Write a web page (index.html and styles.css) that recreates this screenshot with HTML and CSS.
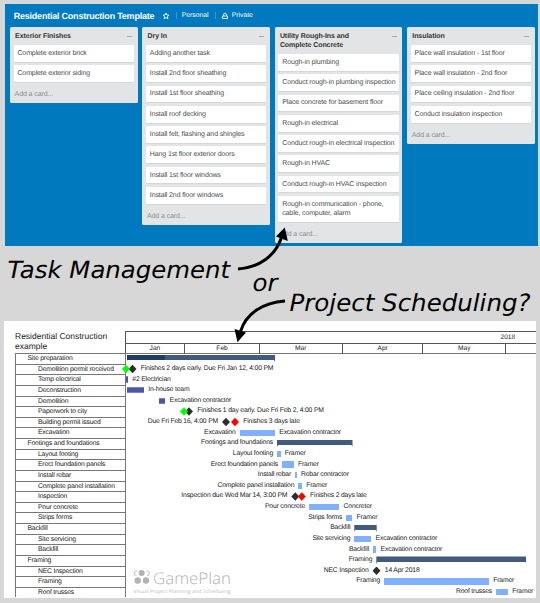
FILE: index.html
```html
<!DOCTYPE html>
<html lang="en">
<head>
<meta charset="utf-8">
<title>Task Management or Project Scheduling?</title>
<link rel="stylesheet" href="styles.css">
</head>
<body>
<section class="board">
  <header class="board-head">
    <h1>Residential Construction Template</h1>
    <svg class="star" viewBox="0 0 16 16"><path d="M8 2l1.800 4 4.200.400-3.200 2.800 1 4.300L8 11.300l-3.800 2.200 1-4.300L2 6.400 6.200 6z"/></svg>
    <i class="sep"></i><span class="personal">Personal</span><i class="sep"></i>
    <svg class="lock" viewBox="0 0 16 16"><path d="M5 8V5.500a3 3 0 0 1 6 0V8M3 8h10v5H3z"/></svg>
    <span class="private">Private</span>
  </header>
  <div class="lists">
    <div class="list">
      <h2>Exterior Finishes<b></b></h2>
      <p>Complete exterior brick</p><p>Complete exterior siding</p>
      <footer>Add a card...</footer>
    </div>
    <div class="list">
      <h2>Dry In<b></b></h2>
      <p>Adding another task</p><p>Install 2nd floor sheathing</p><p>Install 1st floor sheathing</p><p>Install roof decking</p><p>Install felt, flashing and shingles</p><p>Hang 1st floor exterior doors</p><p>Install 1st floor windows</p><p>Install 2nd floor windows</p>
      <footer>Add a card...</footer>
    </div>
    <div class="list">
      <h2>Utility Rough-Ins and<br>Complete Concrete<b></b></h2>
      <p>Rough-in plumbing</p><p>Conduct rough-in plumbing inspection</p><p>Place concrete for basement floor</p><p>Rough-in electrical</p><p>Conduct rough-in electrical inspection</p><p>Rough-in HVAC</p><p>Conduct rough-in HVAC inspection</p><p>Rough-in communication - phone,<br>cable, computer, alarm</p>
      <footer>Add a card...</footer>
    </div>
    <div class="list">
      <h2>Insulation<b></b></h2>
      <p>Place wall insulation - 1st floor</p><p>Place wall insulation - 2nd floor</p><p>Place ceiling insulation - 2nd floor</p><p>Conduct insulation inspection</p>
      <footer>Add a card...</footer>
    </div>
  </div>
</section>

<svg class="question" viewBox="0 245.500 540 75.500">
  <g class="big">
    <text x="7.500" y="277" textLength="222.500" lengthAdjust="spacingAndGlyphs">Task Management</text>
    <text x="252.500" y="290" textLength="25" lengthAdjust="spacingAndGlyphs">or</text>
    <text x="289.500" y="310.300" textLength="241" lengthAdjust="spacingAndGlyphs">Project Scheduling?</text>
  </g>
  <path class="stroke" d="M238 268.500C259 267 275 256 281.500 237"/>
  <path class="head" d="M284.800 227L287.800 240.500 276 236z"/>
  <path class="stroke" d="M285 300.500C263 302 246 313 240.500 331"/>
  <path class="head" d="M237.500 341.800L234.500 328.500 246 332z"/>
</svg>

<section class="plan">
  <div class="scale">
    <h3>Residential Construction<br>example</h3>
    <div class="calendar">
      <div class="year">2018</div>
      <div class="months"><span>Jan</span><span>Feb</span><span>Mar</span><span>Apr</span><span>May</span><span></span></div>
    </div>
  </div>
  <div class="rows">
    <div class="row group"><span class="name">Site preparation</span><span class="pre" style="width:1px"></span><i class="sum" style="width:148.500px"><i class="done"></i></i></div>
    <div class="row"><span class="name">Demolition permit received</span><span class="pre" style="width:0"></span><i class="dia green first"></i><i class="dia black" style="margin-left:-1.500px"></i><span class="post">Finishes 2 days early. Due Fri Jan 12, 4:00 PM</span></div>
    <div class="row"><span class="name">Temp electrical</span><span class="pre" style="width:.5px"></span><i class="bar deep" style="width:2px"></i><span class="post">#2 Electrician</span></div>
    <div class="row"><span class="name">Deconstruction</span><span class="pre" style="width:1.800px"></span><i class="bar deep" style="width:16.700px"></i><span class="post">In-house team</span></div>
    <div class="row"><span class="name">Demolition</span><span class="pre" style="width:33.800px"></span><i class="bar deep" style="width:6px"></i><span class="post">Excavation contractor</span></div>
    <div class="row"><span class="name">Paperwork to city</span><span class="pre" style="width:54.500px"></span><i class="dia green"></i><i class="dia black" style="margin-left:-3px"></i><span class="post">Finishes 1 day early. Due Fri Feb 2, 4:00 PM</span></div>
    <div class="row"><span class="name">Building permit issued</span><span class="pre" style="width:96.500px">Due Fri Feb 16, 4:00 PM</span><i class="dia black"></i><i class="dia red" style="margin-left:1px"></i><span class="post">Finishes 3 days late</span></div>
    <div class="row"><span class="name">Excavation</span><span class="pre" style="width:114px">Excavation</span><i class="bar" style="width:35.500px"></i><span class="post">Excavation contractor</span></div>
    <div class="row group"><span class="name">Footings and foundations</span><span class="pre" style="width:151.500px">Footings and foundations</span><i class="sum" style="width:75.500px"></i></div>
    <div class="row"><span class="name">Layout footing</span><span class="pre" style="width:151.500px">Layout footing</span><i class="bar" style="width:3.500px"></i><span class="post">Framer</span></div>
    <div class="row"><span class="name">Erect foundation panels</span><span class="pre" style="width:156.500px">Erect foundation panels</span><i class="bar" style="width:11.700px"></i><span class="post">Framer</span></div>
    <div class="row"><span class="name">Install rebar</span><span class="pre" style="width:169.500px">Install rebar</span><i class="bar" style="width:1.700px"></i><span class="post">Rebar contractor</span></div>
    <div class="row"><span class="name">Complete panel installation</span><span class="pre" style="width:172.800px">Complete panel installation</span><i class="bar" style="width:3.700px"></i><span class="post">Framer</span></div>
    <div class="row"><span class="name">Inspection</span><span class="pre" style="width:165.800px">Inspection due Wed Mar 14, 3:00 PM</span><i class="dia black"></i><i class="dia red" style="margin-left:-1.500px"></i><span class="post">Finishes 2 days late</span></div>
    <div class="row"><span class="name">Pour concrete</span><span class="pre" style="width:183.500px">Pour concrete</span><i class="bar" style="width:30.300px"></i><span class="post">Concreter</span></div>
    <div class="row"><span class="name">Strips forms</span><span class="pre" style="width:220.800px">Strips forms</span><i class="bar" style="width:6px"></i><span class="post">Framer</span></div>
    <div class="row group"><span class="name">Backfill</span><span class="pre" style="width:228.800px">Backfill</span><i class="sum" style="width:22.400px"></i></div>
    <div class="row"><span class="name">Site servicing</span><span class="pre" style="width:228.800px">Site servicing</span><i class="bar" style="width:17px"></i><span class="post">Excavation contractor</span></div>
    <div class="row"><span class="name">Backfill</span><span class="pre" style="width:247.500px">Backfill</span><i class="bar" style="width:3.300px"></i><span class="post">Excavation contractor</span></div>
    <div class="row group"><span class="name">Framing</span><span class="pre" style="width:250.800px">Framing</span><i class="sum" style="width:150px"></i></div>
    <div class="row"><span class="name">NEC Inspection</span><span class="pre" style="width:247px">NEC Inspection</span><i class="dia black"></i><span class="post">14 Apr 2018</span></div>
    <div class="row"><span class="name">Framing</span><span class="pre" style="width:258.500px">Framing</span><i class="bar" style="width:105px"></i><span class="post">Framer</span></div>
    <div class="row"><span class="name">Roof trusses</span><span class="pre" style="width:370.500px">Roof trusses</span><i class="bar" style="width:12px"></i><span class="post">Framer</span></div>
  </div>
  <svg class="logo" viewBox="0 0 100 26">
    <circle cx="8.700" cy="3" r="3"/><circle cx="4.700" cy="10.500" r="3.200"/><circle cx="13" cy="10.500" r="3.200"/>
    <path d="M3.500 5.500A2.200 2.200 0 1 1 4 1.200M13.500 1.200A2.200 2.200 0 1 1 14 5.500"/>
    <text class="brand" x="20" y="13.500" textLength="78" lengthAdjust="spacingAndGlyphs">GamePlan</text>
    <text class="tag" x=".5" y="23" textLength="97" lengthAdjust="spacingAndGlyphs">Visual Project Planning and Scheduling</text>
  </svg>
</section>
</body>
</html>
```
FILE: styles.css
```css
* { box-sizing: border-box; margin: 0; padding: 0; }
body { width: 540px; height: 603px; overflow: hidden; background: #d7d7d7; font-family: "Liberation Sans", Arial, sans-serif; padding-top: 4px; text-rendering: geometricPrecision; }
.board { width: 533px; height: 241.500px; margin-left: 5px; background: #0079bf; padding: 0 2.500px 0 5px; }
.board-head { display: flex; align-items: center; height: 23px; padding-left: 3.700px; color: #fff; font-size: 6.800px; }
h1 { font-size: 9px; letter-spacing: -.22px; width: 140px; white-space: nowrap; }
.star, .lock { width: 8px; height: 8px; fill: none; stroke: #fff; stroke-width: 1.800; }
.star { margin: 0 6px 0 8px; }
.sep { width: 1px; height: 7px; background: #3997cf; }
.personal { width: 38px; padding-left: 5px; }
.lock { margin: 0 3px 0 5px; }
.lists { display: grid; grid-template-columns: repeat(4, 127.600px); gap: 4.800px; align-items: start; }
.list { background: #e2e4e6; border-radius: 1.500px; padding: 4.500px 3.600px 0; }
.list h2 { font-size: 7px; letter-spacing: -.06px; line-height: 9px; margin-bottom: 4.500px; padding-left: 1.500px; color: #333; position: relative; white-space: nowrap; }
.list h2 b { position: absolute; right: 2px; top: 4px; width: 5px; height: 1px; background: #a5a9ad; }
.list p { background: #fff; border-radius: 1px; box-shadow: 0 .5px .5px #c8cacc; padding: 3.850px; line-height: 9px; font-size: 7px; letter-spacing: -.12px; color: #4d4d4d; margin-bottom: 3.600px; white-space: nowrap; }
.list footer { font-size: 7px; letter-spacing: -.1px; line-height: 9px; padding: 4.500px 1px 4px; color: #8c8c8c; }
.question { display: block; width: 540px; height: 75.500px; overflow: visible; position: relative; z-index: 2; }
.big { font: italic 23.800px "DejaVu Sans", Verdana, sans-serif; }
.stroke { fill: none; stroke: #000; stroke-width: 3; }
.plan { position: relative; width: 531.700px; height: 276.700px; margin-left: 4px; background: #fff; padding: 10px 0 0 10.500px; color: #222; }
.scale { display: flex; height: 22px; }
h3 { width: 110px; font-weight: normal; font-size: 8.500px; line-height: 9.600px; padding: 1px 0 0 .5px; white-space: nowrap; }
.calendar { flex: 1; border-top: 1px solid #555; border-left: 1px solid #555; font-size: 6.600px; }
.year { height: 10.500px; line-height: 11.500px; text-align: right; padding-right: 20.500px; }
.months { display: grid; grid-template-columns: 58.800px 74.500px 83px 80.700px 82.500px 1fr; height: 11px; line-height: 10px; text-align: center; border-top: 1px solid #555; border-bottom: 1px solid #777; }
.months span + span { border-left: 1px solid #555; }
.row { display: flex; align-items: center; height: 10.636px; font-size: 6.800px; letter-spacing: -.18px; white-space: nowrap; line-height: 10px; }
.name { width: 111px; height: 100%; flex: none; border: solid #777; border-width: 1px 1px 0; padding-left: 22.500px; }
.group .name { padding-left: 12px; }
.pre { flex: none; text-align: right; padding-right: 4px; }
.pre:empty { padding: 0; }
.post { margin-left: 4.300px; }
.bar { flex: none; height: 6.300px; background: #80b0ff; }
.deep { background: #4d55a5; border: solid #7585c5; border-width: 1px 0; }
.sum { flex: none; height: 7.500px; background: #425a7c; clip-path: polygon(0 0, 100% 0, 100% 100%, calc(100% - 1px) 5.500px, 1px 5.500px, 0 100%); }
.done { display: block; width: 38.500px; height: 5.500px; background: #1f3d62; }
.dia { flex: none; width: 8px; height: 8.500px; clip-path: polygon(50% 0, 100% 50%, 50% 100%, 0 50%); }
.first { margin-left: -3.500px; }
.green { background: #0f0; position: relative; z-index: 1; }
.black { background: #2d2d2d; }
.red { background: #f00; }
.logo { position: absolute; left: 128.500px; top: 249px; width: 100px; height: 26px; fill: #b2b2b2; overflow: visible; }
.logo path { fill: none; stroke: #b2b2b2; stroke-width: .8; }
.brand { font: 300 16px "Open Sans", sans-serif; }
.tag { font: 400 4.900px "Open Sans", sans-serif; fill: #bdbdbd; }
```
